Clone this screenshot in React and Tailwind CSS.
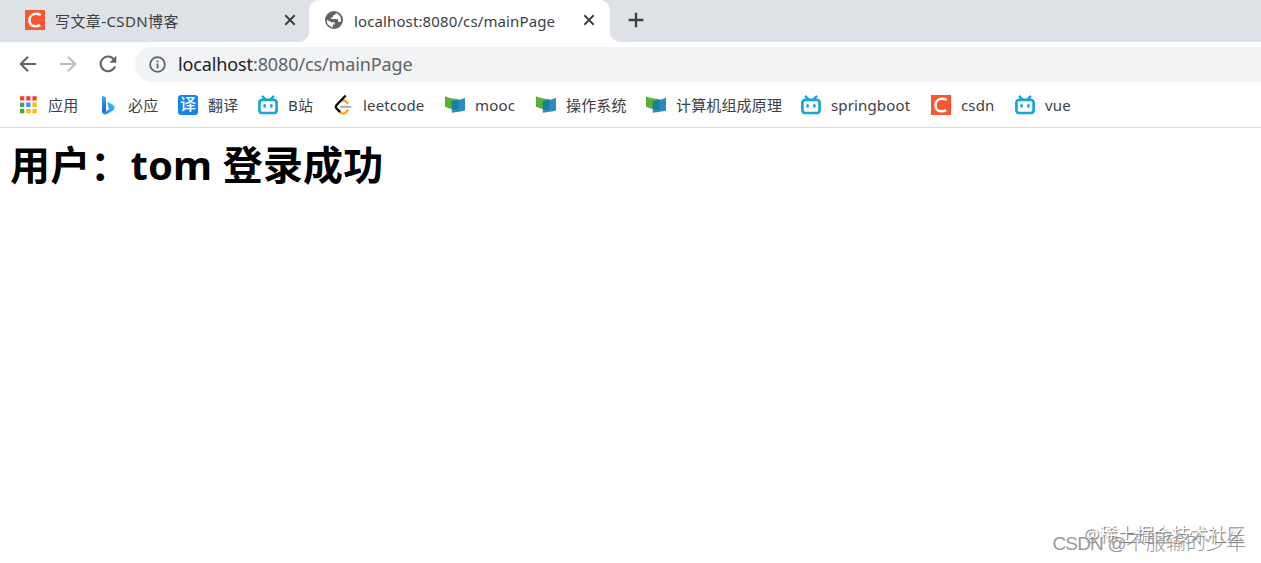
import React from "react";

const CsdnIcon = () => (
  <svg viewBox="0 0 20 20" className="w-5 h-5">
    <rect width="20" height="20" fill="#fc5531" />
    <path
      d="M15.8 5C14.3 4.1 12.8 3.8 11.2 3.8C7.2 3.8 4.5 6.6 4.4 10.2C4.3 13.9 6.5 16.2 10.2 16.2C12.1 16.2 13.8 15.8 15.2 15.1"
      fill="none"
      stroke="#fff"
      strokeWidth="2.5"
    />
  </svg>
);

const GRID_COLORS = [
  "#ea4335", "#ea4335", "#ea4335",
  "#34a853", "#4285f4", "#fbbc05",
  "#34a853", "#fbbc05", "#fbbc05",
];

const AppsIcon = () => (
  <svg viewBox="0 0 20 20" className="w-5 h-5">
    {GRID_COLORS.map((color, i) => (
      <rect
        key={i}
        x={2 + (i % 3) * 6.2}
        y={1.2 + Math.floor(i / 3) * 6.4}
        width="4.3"
        height="4.3"
        fill={color}
      />
    ))}
  </svg>
);

const BingIcon = () => (
  <svg viewBox="0 0 20 20" className="w-5 h-5">
    <defs>
      <linearGradient id="bingStem" x1="0" y1="0" x2="0" y2="1">
        <stop offset="0" stopColor="#35b1f5" />
        <stop offset="1" stopColor="#2356d8" />
      </linearGradient>
      <linearGradient id="bingBowl" x1="1" y1="0" x2="0" y2="1">
        <stop offset="0" stopColor="#36d0ea" />
        <stop offset="1" stopColor="#1c7cf0" />
      </linearGradient>
    </defs>
    <path d="M4 .7L7.2 2C7.7 2.2 8 2.7 8 3.3V16.2L4.8 18.2C4.3 17.7 4 17 4 16Z" fill="url(#bingStem)" />
    <path d="M9.2 6.8L15 9.8C17.2 11 17.3 14 15.2 15.3L9 19C7.3 20 5 19.2 4.4 17.2L8 16.2L11.7 13.8L10.4 12.8Z" fill="url(#bingBowl)" />
  </svg>
);

const TranslateIcon = () => (
  <span className="w-5 h-5 rounded-[3px] bg-[#1485ee] text-white text-[16px] leading-[19px] text-center font-medium">
    译
  </span>
);

const BiliIcon = () => (
  <svg viewBox="0 0 20 20" className="w-5 h-5" fill="none" stroke="#18a5d6" strokeLinecap="round">
    <rect x="1.4" y="4.8" width="17.2" height="13.2" rx="2.8" strokeWidth="2.7" />
    <path d="M4.7 1.5L7.4 4.3M15.3 1.5L12.6 4.3" strokeWidth="2.4" />
    <path d="M6.6 10.3V11.4M13.4 10.3V11.4" strokeWidth="2.5" />
  </svg>
);

const LeetcodeIcon = () => (
  <svg viewBox="0 0 20 20" className="w-5 h-5" fill="none" strokeLinecap="round" strokeWidth="2.3">
    <path d="M8.4 6.2C9.8 4.8 11.3 5 12.3 6L14.7 8.2M5.2 15.3L7.6 17.5C9 19 11.2 19 12.5 17.7L14.7 15.3" stroke="#ffa116" />
    <path d="M8.3 11.8H17.5" stroke="#b3b3b3" />
    <path d="M12 1.3L3.8 9.7C2.5 11 2.5 12.4 3.8 13.8L6.5 16.4" stroke="#070706" />
  </svg>
);

const MoocIcon = () => (
  <svg viewBox="0 0 20 20" className="w-5 h-5">
    <path d="M0 1.2C4 3.3 8 3.8 13.5 4V14.8C8.5 14.5 4.2 13.8 0 11.8Z" fill="#5caf36" />
    <path d="M20 2.7C15.8 4.8 11.7 5.5 6.8 6V17.7C11.7 16.7 16.3 16.4 20 15.4Z" fill="#3189c3" />
    <path d="M6.8 6C9.2 5.8 11.4 5.5 13.5 5V14.8C11.2 14.8 8.9 14.6 6.8 14.3Z" fill="#15819a" />
  </svg>
);

const GlobeIcon = () => (
  <svg viewBox="0 0 20 20" className="w-5 h-5">
    <circle cx="10" cy="10" r="9" fill="#5f6368" />
    <path d="M11.8 2.9C11.7 4.5 10.6 5.2 9 5.3V7.2H7.2V9H12.7C13.6 9 14 9.7 14 10.7V11.7H17.1C17.4 8 16 4.4 11.8 2.9Z" fill="#fff" />
    <path d="M2.8 9.7L7.4 12.2H10.6V14.4H8.9V17.2C5 16.7 2.4 13.2 2.8 9.7Z" fill="#fff" />
  </svg>
);

const CloseIcon = () => (
  <svg viewBox="0 0 12 12" className="w-3 h-3" stroke="#3c4043" strokeWidth="2">
    <path d="M1.3 1.3L10.7 10.7M10.7 1.3L1.3 10.7" />
  </svg>
);

const BOOKMARKS = [
  { label: "应用", Icon: AppsIcon, width: "w-20" },
  { label: "必应", Icon: BingIcon, width: "w-20" },
  { label: "翻译", Icon: TranslateIcon, width: "w-20" },
  { label: "B站", Icon: BiliIcon, width: "w-[75px]" },
  { label: "leetcode", Icon: LeetcodeIcon, width: "w-[112px]" },
  { label: "mooc", Icon: MoocIcon, width: "w-[91px]" },
  { label: "操作系统", Icon: MoocIcon, width: "w-[110px]" },
  { label: "计算机组成原理", Icon: MoocIcon, width: "w-[155px]" },
  { label: "springboot", Icon: BiliIcon, width: "w-[130px]" },
  { label: "csdn", Icon: CsdnIcon, width: "w-[84px]" },
  { label: "vue", Icon: BiliIcon, width: "w-20" },
];

function TabStrip() {
  return (
    <div className="flex h-[42px] bg-white text-[15px] text-[#3c4043]">
      <div className="flex w-[309px] items-center rounded-br-[10px] bg-[#dee1e6] pl-[25px] pr-[13px] pb-[2px]">
        <CsdnIcon />
        <span className="ml-2.5 flex-1 whitespace-nowrap pt-[2px] tracking-[0.4px]">写文章-CSDN博客</span>
        <CloseIcon />
      </div>
      <div className="w-[301px] bg-[#dee1e6]">
        <div className="flex h-full items-center rounded-t-[10px] bg-white pl-[15px] pr-[15px] pb-[2px]">
          <GlobeIcon />
          <span className="ml-[10px] flex-1 whitespace-nowrap pt-[2px] tracking-[0.12px]">
            localhost:8080/cs/mainPage
          </span>
          <CloseIcon />
        </div>
      </div>
      <div className="flex flex-1 items-center rounded-bl-[10px] bg-[#dee1e6] pl-[18px] pb-[2px]">
        <svg viewBox="0 0 16 16" className="h-4 w-4" stroke="#3c4043" strokeWidth="2.3">
          <path d="M8 .7V15.3M.7 8H15.3" />
        </svg>
      </div>
    </div>
  );
}

function Toolbar() {
  return (
    <div className="flex h-[44px] items-center pl-[19px]">
      <svg viewBox="0 0 18 18" className="h-[18px] w-[18px]" fill="none" stroke="#5f6368" strokeWidth="2">
        <path d="M17 9H2M9 1.7L1.7 9L9 16.3" />
      </svg>
      <svg viewBox="0 0 18 18" className="ml-[22px] h-[18px] w-[18px]" fill="none" stroke="#babcbe" strokeWidth="2">
        <path d="M1 9H16M9 1.7L16.3 9L9 16.3" />
      </svg>
      <svg viewBox="0 0 18 18" className="ml-[22px] h-[18px] w-[18px]" fill="none" stroke="#5f6368" strokeWidth="2.1">
        <path d="M15 4.5A7.4 7.4 0 1 0 16 11.3" />
        <path d="M17.3 .8V7.7H10.4Z" fill="#5f6368" stroke="none" />
      </svg>
      <div className="ml-[18px] flex h-[35px] flex-1 items-center rounded-l-full bg-[#f1f3f4] pl-[14px]">
        <svg viewBox="0 0 18 18" className="h-[17px] w-[17px]" fill="none" stroke="#5f6368" strokeWidth="1.9">
          <circle cx="9" cy="9" r="7.8" />
          <path d="M9 8V13.3M9 4.7V6.6" />
        </svg>
        <span className="ml-[12px] whitespace-nowrap text-[18px] tracking-[-0.12px] text-[#5f6368]">
          <span className="text-[#202124]">localhost</span>:8080/cs/mainPage
        </span>
      </div>
    </div>
  );
}

function BookmarkBar() {
  return (
    <div className="flex h-[42px] items-center border-b border-[#d8dadc] pl-[18px] pb-[4px] text-[15px] text-[#3c4043]">
      {BOOKMARKS.map(({ label, Icon, width }) => (
        <div key={label} className={`flex shrink-0 items-center gap-[10px] ${width}`}>
          <Icon />
          <span className="whitespace-nowrap leading-5 tracking-[0.15px]">{label}</span>
        </div>
      ))}
    </div>
  );
}

export default function App() {
  return (
    <div className="relative h-[563px] w-[1261px] overflow-hidden bg-white font-['Noto_Sans','Noto_Sans_CJK_SC',sans-serif]">
      <TabStrip />
      <Toolbar />
      <BookmarkBar />
      <h1 className="pl-[10px] pt-[7px] text-[40px] font-bold leading-[60px] tracking-[0.15px] whitespace-nowrap text-black">
        用户：tom 登录成功
      </h1>

      {/* Watermarks */}
      <span className="absolute right-[17px] top-[522px] text-[18px] leading-6 tracking-[0.1px] whitespace-nowrap text-white [text-shadow:1px_1px_1px_#666]">
        @稀土掘金技术社区
      </span>
      <span className="absolute right-[15px] top-[529px] text-[20px] leading-7 whitespace-nowrap text-[#999] font-['Liberation_Sans','Noto_Sans_CJK_SC',sans-serif]">
        <span className="text-[19px] tracking-[-0.8px]">CSDN @</span>
        <span className="font-light">不服输的少年</span>
      </span>
    </div>
  );
}
